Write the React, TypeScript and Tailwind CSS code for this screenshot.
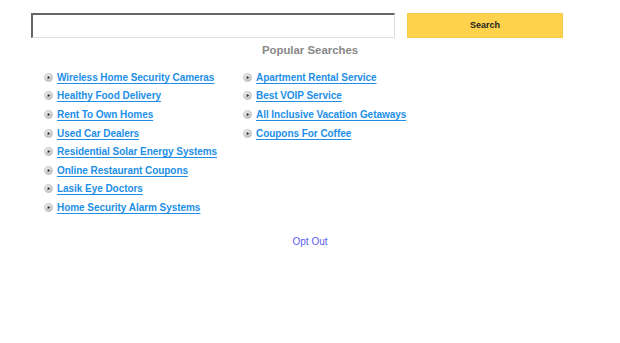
const LEFT = [
  "Wireless Home Security Cameras",
  "Healthy Food Delivery",
  "Rent To Own Homes",
  "Used Car Dealers",
  "Residential Solar Energy Systems",
  "Online Restaurant Coupons",
  "Lasik Eye Doctors",
  "Home Security Alarm Systems",
];

const RIGHT = [
  "Apartment Rental Service",
  "Best VOIP Service",
  "All Inclusive Vacation Getaways",
  "Coupons For Coffee",
];

const Bullet = () => (
  <svg viewBox="0 0 10 10" className="h-[9px] w-[9px] shrink-0" aria-hidden="true">
    <defs>
      <radialGradient id="bg" cx="40%" cy="35%" r="70%">
        <stop offset="0%" stopColor="#f4f4f4" />
        <stop offset="100%" stopColor="#b9b9b9" />
      </radialGradient>
    </defs>
    <circle cx="5" cy="5" r="4.6" fill="url(#bg)" stroke="#c4c4c4" strokeWidth="0.6" />
    <path d="M4 3 L7 5 L4 7 Z" fill="#333" />
  </svg>
);

function Column({ items }: { items: string[] }) {
  return (
    <ul className="flex flex-col">
      {items.map((t) => (
        <li key={t} className="flex h-[18.6px] items-center gap-[4px]">
          <Bullet />
          <a href="#" className="text-[10px] font-bold tracking-[-0.05px] text-[#1d8fe8] underline underline-offset-[2px]">
            {t}
          </a>
        </li>
      ))}
    </ul>
  );
}

export default function App() {
  return (
    <div className="min-h-[343px] w-[620px] bg-white font-['Liberation_Sans',Arial,sans-serif]">
      <div className="flex gap-[12px] pl-[31px] pt-[13px]">
        <input
          type="text"
          className="h-[25px] w-[364px] border-t-2 border-l-2 border-r border-b border-t-[#666] border-l-[#666] border-r-[#ddd] border-b-[#ddd] bg-white outline-none"
        />
        <button className="h-[25px] w-[156px] border border-[#f6cc4a] bg-[#ffd24d] pt-px text-[9px] font-bold text-[#222]">
          Search
        </button>
      </div>

      <h2 className="mt-[5px] text-center text-[11.4px] font-bold leading-[14px] text-[#888]">Popular Searches</h2>

      <div className="mt-[11px] flex pl-[44px]">
        <div className="w-[199px]">
          <Column items={LEFT} />
        </div>
        <Column items={RIGHT} />
      </div>

      <div className="mt-[11px] text-center">
        <a href="#" className="text-[10px] text-[#5b5bf2]">
          Opt Out
        </a>
      </div>
    </div>
  );
}
